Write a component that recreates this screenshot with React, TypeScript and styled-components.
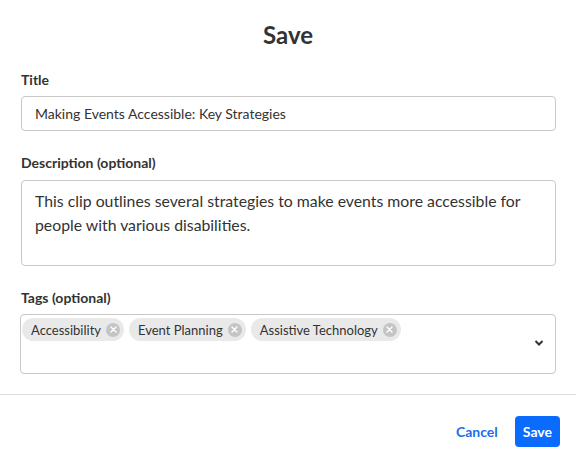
import React from 'react'
import styled, { createGlobalStyle } from 'styled-components'

const GlobalStyle = createGlobalStyle`
  html, body {
    margin: 0;
    padding: 0;
    background: #ffffff;
  }
  body {
    font-family: Lato, "Noto Sans", sans-serif;
    color: #333333;
  }
`

const Dialog = styled.div`
  width: 576px;
  height: 465px;
  display: flex;
  flex-direction: column;
  background: #fff;
`

const Heading = styled.h1`
  margin: 20px 0 22px;
  font-size: 24px;
  line-height: 30px;
  font-weight: 700;
  text-align: center;
  color: #333;
`

const Form = styled.div`
  display: flex;
  flex-direction: column;
  gap: 24px;
  padding: 0 20px 0 21px;
`

const Field = styled.div`
  display: flex;
  flex-direction: column;
  gap: 8px;
`

const Label = styled.label`
  font-size: 14px;
  line-height: 16px;
  font-weight: 700;
  color: #333;
`

const Input = styled.div`
  height: 35px;
  box-sizing: border-box;
  border: 1px solid #c8c8c8;
  border-radius: 4px;
  padding: 0 13px;
  display: flex;
  align-items: center;
  font-size: 14px;
  color: #333;
`

const TextArea = styled.div`
  height: 86px;
  box-sizing: border-box;
  margin-top: 1px;
  border: 1px solid #c8c8c8;
  border-radius: 4px;
  padding: 8px 13px;
  font-size: 15.8px;
  line-height: 24px;
  color: #333;
`

const TagBox = styled.div`
  position: relative;
  height: 60px;
  box-sizing: border-box;
  margin-left: -1px;
  border: 1px solid #c8c8c8;
  border-radius: 4px;
  padding: 3px 40px 0 1px;
  display: flex;
  flex-wrap: wrap;
  align-content: flex-start;
  gap: 5px;
`

const Chip = styled.span`
  height: 23px;
  display: inline-flex;
  align-items: center;
  gap: 5px;
  padding: 0 4px 0 9px;
  border-radius: 12px;
  background: #e9e9e9;
  font-size: 13px;
  color: #333;
`

const ChipClose = styled.span`
  width: 14px;
  height: 14px;
  border-radius: 50%;
  background: #c4c4c4;
  display: inline-flex;
  align-items: center;
  justify-content: center;
`

const Chevron = styled.span`
  position: absolute;
  right: 11px;
  top: 25px;
  display: flex;
`

const Footer = styled.div`
  margin-top: 20px;
  border-top: 1px solid #dedede;
  display: flex;
  justify-content: flex-end;
  align-items: center;
  gap: 9px;
  padding: 21px 16px 0 0;
`

const Button = styled.button<{ $primary?: boolean }>`
  height: 31px;
  border: none;
  border-radius: 4px;
  padding: 0 8px;
  font-family: Lato, "Noto Sans", sans-serif;
  font-size: 14px;
  font-weight: 700;
  cursor: pointer;
  background: ${p => (p.$primary ? '#0a6cff' : 'transparent')};
  color: ${p => (p.$primary ? '#ffffff' : '#1a6ee6')};
`

const tags = ['Accessibility', 'Event Planning', 'Assistive Technology']

const CloseIcon = () => (
  <ChipClose>
    <svg width="7" height="7" viewBox="0 0 7 7">
      <path d="M1 1L6 6M6 1L1 6" stroke="#fff" strokeWidth="1.4" strokeLinecap="round" />
    </svg>
  </ChipClose>
)

export default function App() {
  return (
    <Dialog>
      <GlobalStyle />
      <Heading>Save</Heading>
      <Form>
        <Field>
          <Label>Title</Label>
          <Input>Making Events Accessible: Key Strategies</Input>
        </Field>
        <Field>
          <Label>Description (optional)</Label>
          <TextArea>
            This clip outlines several strategies to make events more accessible for people with
            various disabilities.
          </TextArea>
        </Field>
        <Field>
          <Label>Tags (optional)</Label>
          <TagBox>
            {tags.map(t => (
              <Chip key={t}>
                {t}
                <CloseIcon />
              </Chip>
            ))}
            <Chevron>
              <svg width="10" height="6" viewBox="0 0 10 6">
                <path d="M1.5 1L5 4.5L8.5 1" stroke="#333" strokeWidth="2" fill="none" />
              </svg>
            </Chevron>
          </TagBox>
        </Field>
      </Form>
      <Footer>
        <Button>Cancel</Button>
        <Button $primary>Save</Button>
      </Footer>
    </Dialog>
  )
}
